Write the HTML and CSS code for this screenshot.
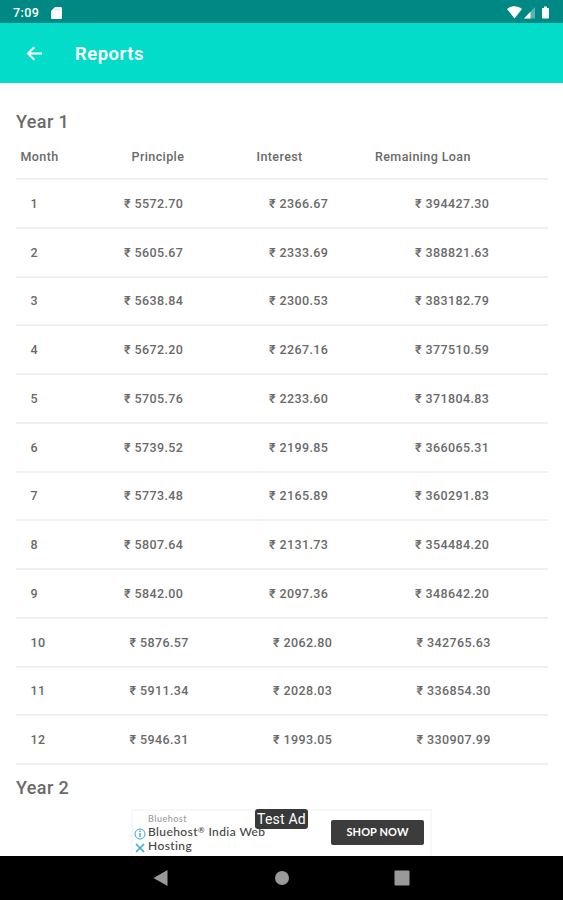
FILE: index.html
```html
<!DOCTYPE html>
<html lang="en">
<head>
  <meta charset="UTF-8">
  <meta name="viewport" content="width=device-width, initial-scale=1">
  <title>Reports</title>
  <link rel="stylesheet" href="styles.css">
</head>
<body>
  <div class="screen">
    <div class="status-bar">
      <span class="time">7:09</span>
      <svg class="sd-icon" width="11" height="12" viewBox="0 0 11 12"><path d="M4 0h5.500A1.300 1.300 0 0 1 11 1.300v9.400A1.300 1.300 0 0 1 9.500 12h-8A1.300 1.300 0 0 1 0 10.700V4z" fill="#fff"/><path d="M4.300 1.700v2M6.300 1.700v2M8.300 1.700v2" stroke="#b5dcda" stroke-width=".8"/></svg>
      <svg class="status-icons" width="43" height="14" viewBox="0 0 43 14">
        <path d="M0 3C4.500-.6 10.500-.6 15 3L7.500 12.500z" fill="#fff"/>
        <path d="M28 1v11.500H17z" fill="#5fb3af"/>
        <path d="M23.500 5.700v6.800H17z" fill="#fff"/>
        <path d="M37 .5h3V2h1.200a.8.8 0 0 1 .8.800v9a.8.8 0 0 1-.8.800h-5.400a.8.8 0 0 1-.8-.8v-9a.8.8 0 0 1 .8-.8H37z" fill="#fff"/>
      </svg>
    </div>

    <header class="app-bar">
      <svg class="back" width="16" height="16" viewBox="0 0 16 16"><path d="M16 7.500H2M8.300 1.200L2 7.500l6.300 6.300" fill="none" stroke="#fff" stroke-width="2"/></svg>
      <h1>Reports</h1>
    </header>

    <main class="content">
      <h2>Year 1</h2>
      <div class="row head"><span>Month</span><span>Principle</span><span>Interest</span><span>Remaining Loan</span></div>
      <div class="row"><span>1</span><span>₹ 5572.70</span><span>₹ 2366.67</span><span>₹ 394427.30</span></div>
      <div class="row"><span>2</span><span>₹ 5605.67</span><span>₹ 2333.69</span><span>₹ 388821.63</span></div>
      <div class="row"><span>3</span><span>₹ 5638.84</span><span>₹ 2300.53</span><span>₹ 383182.79</span></div>
      <div class="row"><span>4</span><span>₹ 5672.20</span><span>₹ 2267.16</span><span>₹ 377510.59</span></div>
      <div class="row"><span>5</span><span>₹ 5705.76</span><span>₹ 2233.60</span><span>₹ 371804.83</span></div>
      <div class="row"><span>6</span><span>₹ 5739.52</span><span>₹ 2199.85</span><span>₹ 366065.31</span></div>
      <div class="row"><span>7</span><span>₹ 5773.48</span><span>₹ 2165.89</span><span>₹ 360291.83</span></div>
      <div class="row"><span>8</span><span>₹ 5807.64</span><span>₹ 2131.73</span><span>₹ 354484.20</span></div>
      <div class="row"><span>9</span><span>₹ 5842.00</span><span>₹ 2097.36</span><span>₹ 348642.20</span></div>
      <div class="row wide"><span>10</span><span>₹ 5876.57</span><span>₹ 2062.80</span><span>₹ 342765.63</span></div>
      <div class="row wide"><span>11</span><span>₹ 5911.34</span><span>₹ 2028.03</span><span>₹ 336854.30</span></div>
      <div class="row wide"><span>12</span><span>₹ 5946.31</span><span>₹ 1993.05</span><span>₹ 330907.99</span></div>
      <h2 class="next-year">Year 2</h2>
    </main>

    <div class="ad">
      <div class="ad-icons">
        <svg width="12" height="12" viewBox="0 0 12 12" fill="none" stroke="#35a9cf"><circle cx="6" cy="6" r="5"/><path d="M6 5v4M6 2.600v1.400" stroke-width="1.400"/></svg>
        <svg width="12" height="12" viewBox="0 0 12 12" fill="none" stroke="#35a9cf" stroke-width="1.500"><path d="M2 2l8 8M10 2l-8 8"/></svg>
      </div>
      <div class="ad-text">
        <div class="ad-brand">Bluehost</div>
        <div class="ad-title">Bluehost<span class="reg">®</span> India Web<br>Hosting</div>
      </div>
      <div class="ad-button">SHOP NOW</div>
      <div class="ad-label">Test Ad</div>
    </div>

    <nav class="nav-bar">
      <svg width="16" height="16" viewBox="0 0 16 16"><path d="M14.500 0v16L.5 8z" fill="#999"/></svg>
      <svg width="16" height="16" viewBox="0 0 16 16"><circle cx="8" cy="8" r="7" fill="#999"/></svg>
      <svg width="16" height="16" viewBox="0 0 16 16"><rect x=".5" y=".5" width="15" height="15" rx="1" fill="#999"/></svg>
    </nav>
  </div>
</body>
</html>
```
FILE: styles.css
```css
* {
  box-sizing: border-box;
}

body {
  margin: 0;
  background: #fff;
  color: #6a6a6a;
  font-family: Roboto, "Noto Sans", sans-serif;
  font-weight: 500;
}

svg {
  display: block;
  flex-shrink: 0;
}

.screen {
  display: flex;
  flex-direction: column;
  height: 900px;
  overflow: hidden;
}

.status-bar {
  display: flex;
  align-items: center;
  height: 23px;
  padding: 2px 13px 0;
  background: #008984;
  color: #fff;
}

.time {
  width: 38px;
  font-size: 12.5px;
  letter-spacing: 0.4px;
}

.status-icons {
  margin-left: auto;
}

.app-bar {
  display: flex;
  align-items: center;
  height: 60px;
  padding: 1px 26px 0;
  background: #03dcc9;
  color: #fff;
}

.app-bar h1 {
  margin: 1px 0 0 33px;
  font-size: 18.5px;
  font-weight: 600;
  letter-spacing: 0.5px;
}

.content {
  flex: 1;
  padding: 26px 15px 0 16px;
}

h2 {
  margin: 0;
  font-size: 18px;
  font-weight: 500;
  line-height: 25px;
  letter-spacing: 0.4px;
}

.row {
  display: grid;
  grid-template-columns: 93.5px 145px 146px 1fr;
  align-items: center;
  height: 48.75px;
  padding-left: 14.5px;
  border-bottom: 2px solid #f0f0f0;
  font-size: 12.5px;
  letter-spacing: 0.4px;
  white-space: nowrap;
}

.row.head {
  grid-template-columns: 111px 125px 118.5px 1fr;
  height: 46px;
  padding: 0 0 0 4.5px;
}

.row.wide {
  grid-template-columns: 99px 143.5px 143.5px 1fr;
}

.next-year {
  margin-top: 10px;
}

.ad {
  position: relative;
  display: flex;
  width: 301px;
  height: 47px;
  margin-left: 131px;
  border: 2px solid #f8f8f8;
  border-bottom: 0;
  color: #444;
  font-family: Lato, sans-serif;
}

.ad-icons {
  display: flex;
  flex-direction: column;
  gap: 2px;
  padding: 17px 2px 0 1px;
}

.ad-text {
  padding-top: 2px;
  white-space: nowrap;
}

.ad-brand {
  color: #999;
  font-size: 9px;
  line-height: 12px;
  letter-spacing: 0.5px;
}

.ad-title {
  font-size: 12px;
  line-height: 14px;
  letter-spacing: 0.4px;
}

.reg {
  font-size: 8px;
  line-height: 1;
  vertical-align: 3px;
}

.ad-button {
  width: 93px;
  height: 25px;
  margin: 9px 6px 0 auto;
  border-radius: 2px;
  background: #3c3c3c;
  color: #fff;
  font-size: 11px;
  font-weight: 700;
  line-height: 24px;
  letter-spacing: 0.1px;
  text-align: center;
}

.ad-label {
  position: absolute;
  top: -2px;
  left: 122px;
  width: 53px;
  height: 20px;
  border-radius: 3px;
  background: #393939;
  color: #fff;
  font: 400 14px/21px Roboto, sans-serif;
  letter-spacing: 0.2px;
  text-align: center;
}

.nav-bar {
  display: flex;
  align-items: center;
  justify-content: space-between;
  height: 44px;
  padding: 0 153px;
  background: #000;
}
```
